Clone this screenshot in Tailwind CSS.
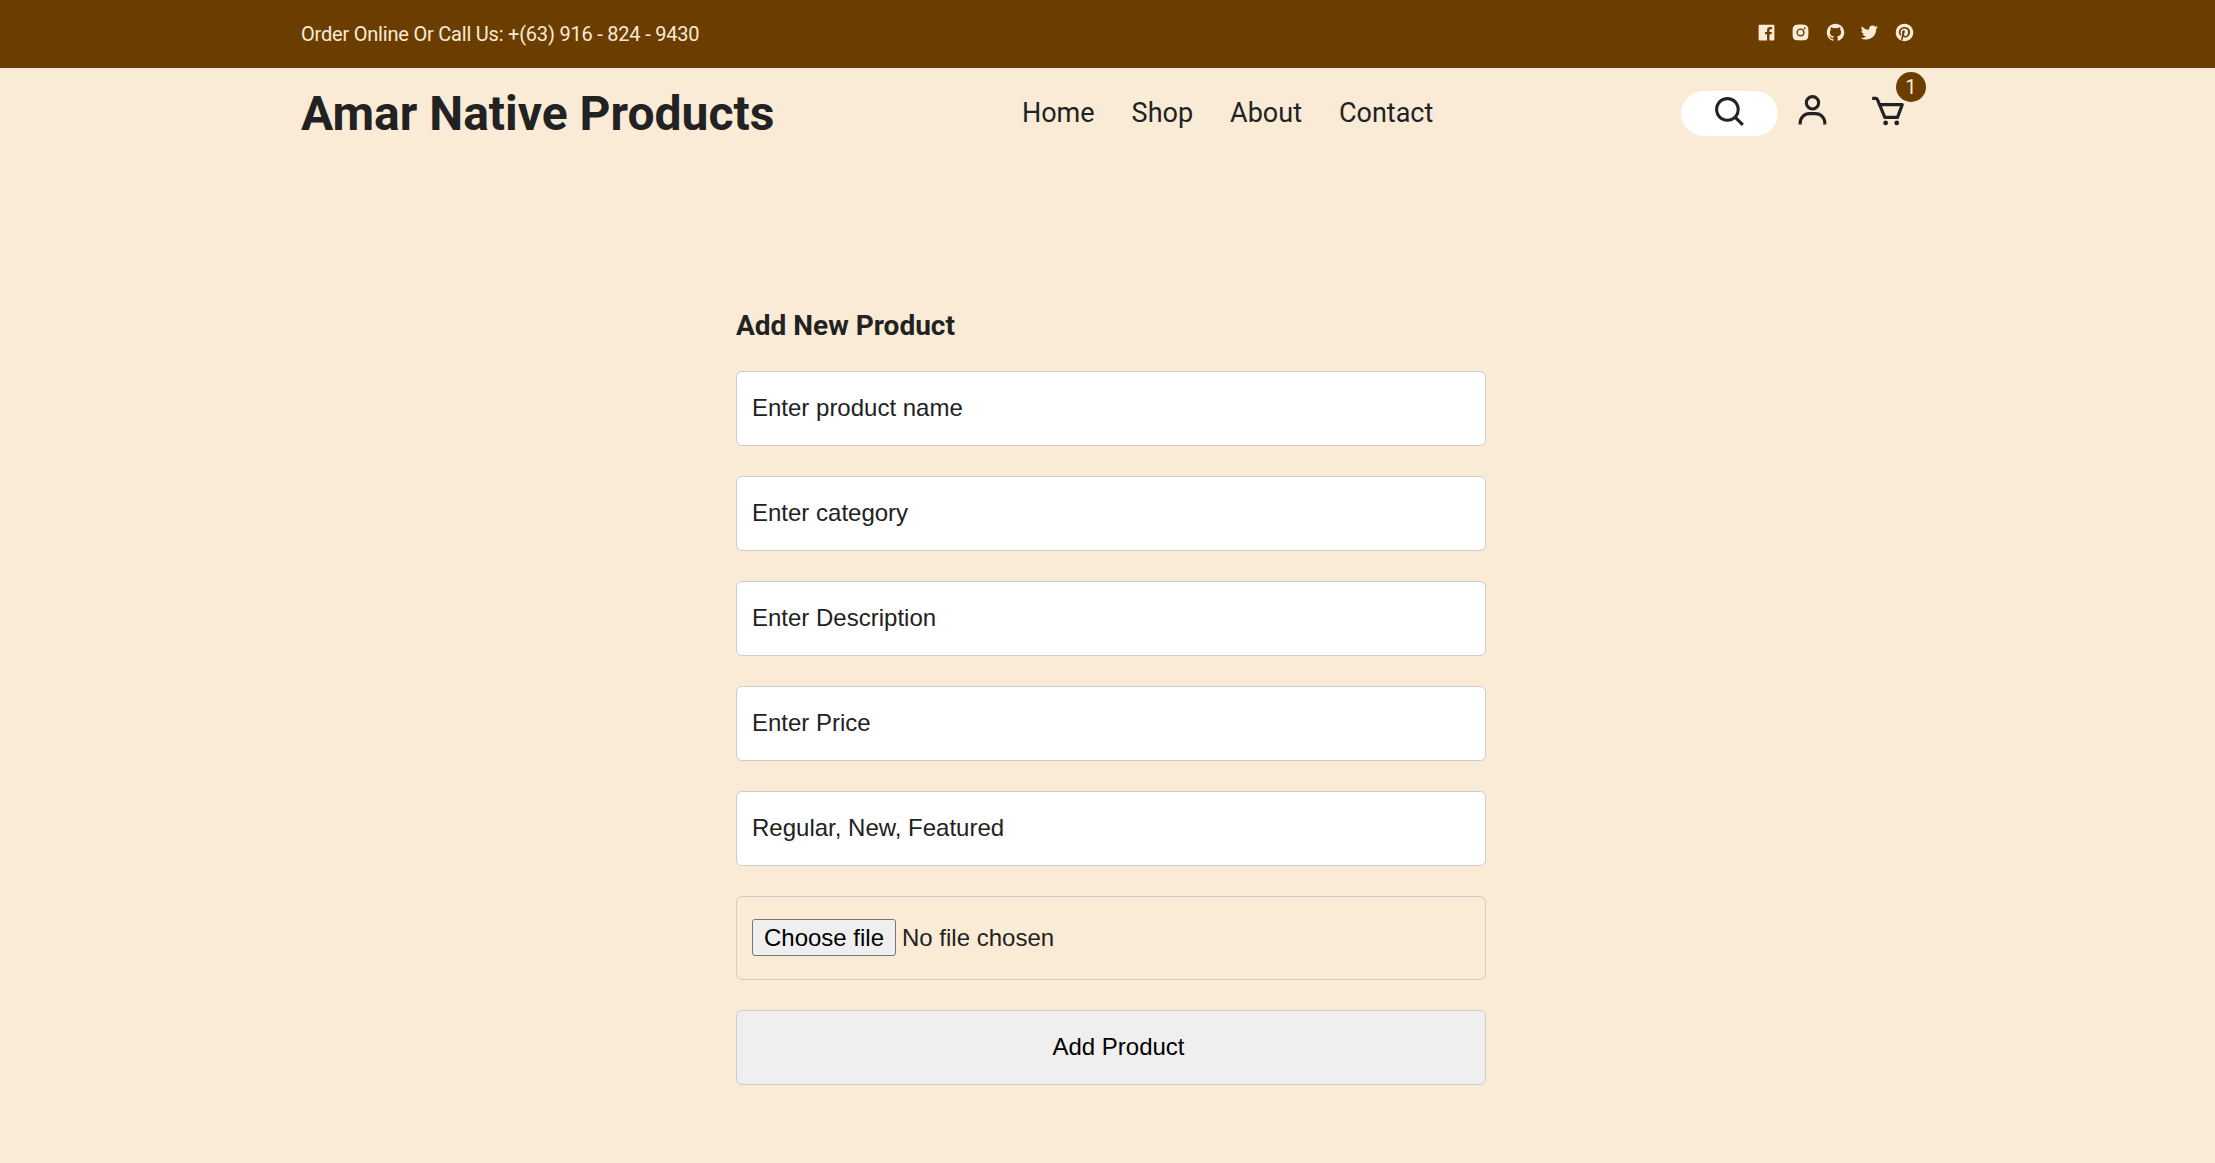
<!DOCTYPE html>
<html lang="en">
<head>
    <meta charset="UTF-8">
    <title>Amar Native Products</title>
    <script src="https://cdn.jsdelivr.net/npm/@tailwindcss/browser@4"></script>
</head>
<body class="bg-[#faebd7] text-[#222] font-['Roboto',sans-serif] min-h-[1163px] overflow-hidden">
    <!-- top bar -->
    <div class="bg-[#6b3e00] h-[68px]">
        <div class="w-[1613px] mx-auto h-full flex items-center justify-between">
            <p class="text-[#faebd7] text-[20px] tracking-[-0.21px]">Order Online Or Call Us: +(63) 916 - 824 - 9430</p>
            <div class="flex items-center gap-[13.5px] text-[#faebd7] pb-[4px] mr-[-0.5px]">
                <svg class="w-[21px] h-[21px] fill-current" viewBox="0 0 24 24"><path d="M20 3H4a1 1 0 0 0-1 1v16a1 1 0 0 0 1 1h8.615v-6.96h-2.338v-2.725h2.338v-2c0-2.325 1.42-3.592 3.5-3.592.699-.002 1.399.034 2.095.107v2.42h-1.435c-1.128 0-1.348.538-1.348 1.325v1.735h2.697l-.35 2.725h-2.348V21H20a1 1 0 0 0 1-1V4a1 1 0 0 0-1-1z"/></svg>
                <svg class="w-[21px] h-[21px] fill-current" viewBox="0 0 24 24"><path d="M20.947 8.305a6.53 6.53 0 0 0-.419-2.216 4.61 4.61 0 0 0-2.633-2.633 6.606 6.606 0 0 0-2.186-.42c-.962-.043-1.267-.055-3.709-.055s-2.755 0-3.71.055a6.606 6.606 0 0 0-2.185.42 4.607 4.607 0 0 0-2.633 2.633 6.554 6.554 0 0 0-.419 2.185c-.043.963-.056 1.268-.056 3.71s0 2.754.056 3.71c.015.748.156 1.486.419 2.187a4.61 4.61 0 0 0 2.634 2.632 6.584 6.584 0 0 0 2.185.45c.963.043 1.268.056 3.71.056s2.755 0 3.71-.056a6.59 6.59 0 0 0 2.186-.419 4.615 4.615 0 0 0 2.633-2.633c.263-.7.404-1.438.419-2.187.043-.962.056-1.267.056-3.71-.002-2.442-.002-2.752-.058-3.709zm-8.953 8.297c-2.554 0-4.623-2.069-4.623-4.623s2.069-4.623 4.623-4.623a4.623 4.623 0 0 1 0 9.246zm4.807-8.339a1.077 1.077 0 0 1-1.078-1.078 1.077 1.077 0 1 1 2.155 0c0 .596-.482 1.078-1.077 1.078z"/><circle cx="11.994" cy="11.979" r="3.003"/></svg>
                <svg class="w-[21px] h-[21px] fill-current" viewBox="0 0 24 24"><path fill-rule="evenodd" clip-rule="evenodd" d="M12.026 2c-5.509 0-9.974 4.465-9.974 9.974 0 4.406 2.857 8.145 6.821 9.465.499.09.679-.217.679-.481 0-.237-.008-.865-.011-1.696-2.775.602-3.361-1.338-3.361-1.338-.452-1.152-1.107-1.459-1.107-1.459-.905-.619.069-.605.069-.605 1.002.07 1.527 1.028 1.527 1.028.89 1.524 2.336 1.084 2.902.829.091-.645.351-1.085.635-1.334-2.214-.251-4.542-1.107-4.542-4.93 0-1.087.389-1.979 1.024-2.675-.101-.253-.446-1.268.099-2.64 0 0 .837-.269 2.742 1.021a9.582 9.582 0 0 1 2.496-.336 9.554 9.554 0 0 1 2.496.336c1.906-1.291 2.742-1.021 2.742-1.021.545 1.372.203 2.387.099 2.64.64.696 1.024 1.587 1.024 2.675 0 3.833-2.33 4.675-4.552 4.922.355.308.675.916.675 1.846 0 1.334-.012 2.41-.012 2.737 0 .267.178.577.687.479C19.146 20.115 22 16.379 22 11.974 22 6.465 17.535 2 12.026 2z"/></svg>
                <svg class="w-[21px] h-[21px] fill-current" viewBox="0 0 24 24"><path d="M19.633 7.997c.013.175.013.349.013.523 0 5.325-4.053 11.461-11.46 11.461-2.282 0-4.402-.661-6.186-1.809.324.037.636.05.973.05a8.07 8.07 0 0 0 5.001-1.721 4.036 4.036 0 0 1-3.767-2.793c.249.037.499.062.761.062.361 0 .724-.05 1.061-.137a4.027 4.027 0 0 1-3.23-3.953v-.05c.537.299 1.16.486 1.82.511a4.022 4.022 0 0 1-1.796-3.354c0-.748.199-1.434.548-2.032a11.457 11.457 0 0 0 8.306 4.215c-.062-.3-.1-.611-.1-.923a4.026 4.026 0 0 1 4.028-4.028c1.16 0 2.207.486 2.943 1.272a7.957 7.957 0 0 0 2.556-.973 4.02 4.02 0 0 1-1.771 2.22 8.073 8.073 0 0 0 2.319-.624 8.645 8.645 0 0 1-2.019 2.083z"/></svg>
                <svg class="w-[21px] h-[21px] fill-current" viewBox="0 0 24 24"><path d="M11.99 2C6.472 2 2 6.473 2 11.99c0 4.232 2.633 7.85 6.35 9.306-.088-.79-.166-2.006.034-2.868.182-.78 1.172-4.966 1.172-4.966s-.299-.599-.299-1.484c0-1.388.805-2.425 1.808-2.425.853 0 1.264.64 1.264 1.407 0 .858-.546 2.139-.827 3.327-.235.994.499 1.805 1.479 1.805 1.775 0 3.141-1.872 3.141-4.575 0-2.392-1.719-4.064-4.173-4.064-2.843 0-4.512 2.132-4.512 4.335 0 .858.331 1.779.744 2.28a.3.3 0 0 1 .069.286c-.076.315-.245.994-.277 1.133-.044.183-.145.222-.335.134-1.247-.581-2.027-2.405-2.027-3.871 0-3.151 2.289-6.045 6.601-6.045 3.466 0 6.159 2.469 6.159 5.77 0 3.444-2.171 6.213-5.184 6.213-1.013 0-1.964-.525-2.29-1.146l-.623 2.374c-.225.868-.834 1.956-1.241 2.62a10 10 0 0 0 2.958.445c5.517 0 9.99-4.473 9.99-9.99S17.507 2 11.99 2"/></svg>
            </div>
        </div>
    </div>

    <!-- main header -->
    <header class="w-[1613px] mx-auto h-[90px] flex items-center justify-between">
        <a href="#" class="text-[48px] font-bold leading-none mt-[2px]">Amar Native Products</a>
        <nav class="flex items-center gap-[37px] text-[27px]">
            <a href="#">Home</a>
            <a href="#">Shop</a>
            <a href="#">About</a>
            <a href="#">Contact</a>
        </nav>
        <div class="flex items-center w-[233px]">
            <div class="w-[97px] h-[45px] bg-white rounded-full flex items-center justify-center">
                <svg class="w-[37px] h-[37px] fill-[#222] ml-[2px] mb-[1px]" viewBox="0 0 24 24"><path d="M10 18a7.952 7.952 0 0 0 4.897-1.688l4.396 4.396 1.414-1.414-4.396-4.396A7.952 7.952 0 0 0 18 10c0-4.411-3.589-8-8-8s-8 3.589-8 8 3.589 8 8 8zm0-14c3.309 0 6 2.691 6 6s-2.691 6-6 6-6-2.691-6-6 2.691-6 6-6z"/></svg>
            </div>
            <svg class="w-[37px] h-[37px] fill-[#222] ml-[16px] mb-[6px]" viewBox="0 0 24 24"><path d="M12 2a5 5 0 1 0 5 5 5 5 0 0 0-5-5zm0 8a3 3 0 1 1 3-3 3 3 0 0 1-3 3zm9 11v-1a7 7 0 0 0-7-7h-4a7 7 0 0 0-7 7v1h2v-1a5 5 0 0 1 5-5h4a5 5 0 0 1 5 5v1z"/></svg>
            <div class="relative ml-[38px] mb-[4px]">
                <svg class="w-[38px] h-[38px] fill-[#222]" viewBox="0 0 24 24"><path d="M21.822 7.431A1 1 0 0 0 21 7H7.333L6.179 4.23A1.994 1.994 0 0 0 4.333 3H2v2h2.333l4.744 11.385A1 1 0 0 0 10 17h8c.417 0 .79-.259.937-.648l3-8a1 1 0 0 0-.115-.921zM17.307 15h-6.64l-2.5-6h11.39l-2.25 6z"/><circle cx="10.5" cy="19.5" r="1.5"/><circle cx="17.5" cy="19.5" r="1.5"/></svg>
                <span class="absolute top-[-20px] right-[-19px] w-[30px] h-[30px] rounded-full bg-[#6b3e00] text-[#faebd7] text-[20px] flex items-center justify-center">1</span>
            </div>
        </div>
    </header>

    <!-- add product form -->
    <main class="w-[750px] ml-[736px] pt-[150px]">
        <h2 class="text-[28px] font-bold leading-[36px] mb-[27px]">Add New Product</h2>
        <form class="flex flex-col gap-[30px] font-['Liberation_Sans',sans-serif] text-[24px]">
            <input type="text" placeholder="Enter product name" class="h-[75px] px-[15px] pb-[2px] bg-white border border-[#ccc] rounded-[6px] placeholder:text-[#222] outline-none">
            <input type="text" placeholder="Enter category" class="h-[75px] px-[15px] pb-[2px] bg-white border border-[#ccc] rounded-[6px] placeholder:text-[#222] outline-none">
            <input type="text" placeholder="Enter Description" class="h-[75px] px-[15px] pb-[2px] bg-white border border-[#ccc] rounded-[6px] placeholder:text-[#222] outline-none">
            <input type="text" placeholder="Enter Price" class="h-[75px] px-[15px] pb-[2px] bg-white border border-[#ccc] rounded-[6px] placeholder:text-[#222] outline-none">
            <input type="text" placeholder="Regular, New, Featured" class="h-[75px] px-[15px] pb-[2px] bg-white border border-[#ccc] rounded-[6px] placeholder:text-[#222] outline-none">
            <div class="h-[84px] px-[15px] flex items-center gap-[6px] border border-[#ccc] rounded-[6px]">
                <label for="image" class="h-[37px] w-[144px] mb-[1px] flex items-center justify-center bg-[#efefef] border border-[#767676] rounded-[3px] text-black">Choose file</label>
                <input id="image" type="file" class="hidden">
                <span>No file chosen</span>
            </div>
            <button type="button" class="h-[75px] pl-[15px] pb-[2px] bg-[#efefef] border border-[#ccc] rounded-[6px] text-black">Add Product</button>
        </form>
    </main>
</body>
</html>
